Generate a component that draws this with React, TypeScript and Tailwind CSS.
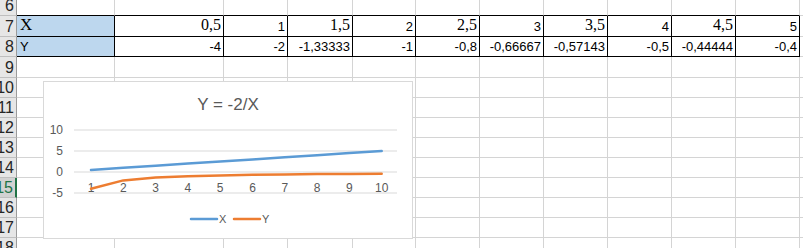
import React from "react";

const COLS = [98, 109, 64, 65, 63, 64, 64, 64, 64, 64, 64];
const ROWS = [
  { n: 6, h: 16 },
  { n: 7, h: 21 },
  { n: 8, h: 20 },
  { n: 9, h: 21 },
  { n: 10, h: 20 },
  { n: 11, h: 20 },
  { n: 12, h: 20 },
  { n: 13, h: 20 },
  { n: 14, h: 20 },
  { n: 15, h: 20 },
  { n: 16, h: 20 },
  { n: 17, h: 20 },
  { n: 18, h: 20 },
];

const xRow = ["0,5", "1", "1,5", "2", "2,5", "3", "3,5", "4", "4,5", "5"];
const yRow = [
  "-4",
  "-2",
  "-1,33333",
  "-1",
  "-0,8",
  "-0,66667",
  "-0,57143",
  "-0,5",
  "-0,44444",
  "-0,4",
];

const xVals = [0.5, 1, 1.5, 2, 2.5, 3, 3.5, 4, 4.5, 5];
const yVals = xVals.map((v) => -2 / v);

function Cell({ row, col }: { row: number; col: number }) {
  const inTable = row === 7 || row === 8;
  const aboveTable = row === 6;
  const isA = col === 0;

  let content: React.ReactNode = null;
  if (row === 7 && isA) {
    content = (
      <span className="pl-[3px] font-['Liberation_Serif',serif] text-[17px] leading-none text-black">
        X
      </span>
    );
  } else if (row === 8 && isA) {
    content = (
      <span className="pl-[3px] text-[13px] leading-none text-black">Y</span>
    );
  } else if (row === 7) {
    const t = xRow[col - 1];
    const half = t.includes(",");
    content = (
      <span
        className={
          half
            ? "ml-auto pr-[2px] font-['Liberation_Serif',serif] text-[16px] leading-none text-black"
            : "ml-auto pr-[2px] text-[13px] leading-none text-black"
        }
      >
        {t}
      </span>
    );
  } else if (row === 8) {
    content = (
      <span className="ml-auto pr-[2px] text-[13px] leading-none text-black">
        {yRow[col - 1]}
      </span>
    );
  }

  return (
    <div
      className={`flex items-end overflow-hidden pb-[3px] ${
        inTable
          ? "border-r border-b border-r-black border-b-black"
          : aboveTable
            ? "border-r border-b border-r-[#d4d4d4] border-b-black"
            : "border-r border-b border-[#d4d4d4]"
      } ${inTable && isA ? "bg-[#bdd7ee]" : "bg-white"}`}
    >
      {content}
    </div>
  );
}

function Chart() {
  const px = (i: number) => 47 + 32.3 * i;
  const py = (v: number) => 90 - 4.2 * v;
  const pts = (vals: number[]) =>
    vals.map((v, i) => `${px(i).toFixed(1)},${py(v).toFixed(1)}`).join(" ");
  const font = "Liberation Sans, sans-serif";

  return (
    <div className="absolute left-[43px] top-[81px] h-[158px] w-[370px] border border-[#d9d9d9] bg-white">
      <svg width="368" height="156" className="block">
        <text
          x="184"
          y="28"
          textAnchor="middle"
          fontSize="17"
          fill="#595959"
          fontFamily={font}
        >
          Y = -2/X
        </text>
        {[10, 5, 0, -5].map((v) => (
          <g key={v}>
            <line
              x1="30"
              x2="353"
              y1={py(v)}
              y2={py(v)}
              stroke="#d9d9d9"
              strokeWidth="1"
            />
            <text
              x="19"
              y={py(v) + 4}
              textAnchor="end"
              fontSize="12"
              fill="#595959"
              fontFamily={font}
            >
              {v}
            </text>
          </g>
        ))}
        {xVals.map((_, i) => (
          <text
            key={i}
            x={px(i)}
            y="110"
            textAnchor="middle"
            fontSize="12"
            fill="#595959"
            fontFamily={font}
          >
            {i + 1}
          </text>
        ))}
        <polyline
          points={pts(xVals)}
          fill="none"
          stroke="#5b9bd5"
          strokeWidth="2.5"
          strokeLinecap="round"
          strokeLinejoin="round"
        />
        <polyline
          points={pts(yVals)}
          fill="none"
          stroke="#ed7d31"
          strokeWidth="2.5"
          strokeLinecap="round"
          strokeLinejoin="round"
        />
        {/* legend */}
        <line
          x1="147"
          x2="173"
          y1="137"
          y2="137"
          stroke="#5b9bd5"
          strokeWidth="2.5"
          strokeLinecap="round"
        />
        <text x="175" y="141" fontSize="11" fill="#595959" fontFamily={font}>
          X
        </text>
        <line
          x1="190"
          x2="216"
          y1="137"
          y2="137"
          stroke="#ed7d31"
          strokeWidth="2.5"
          strokeLinecap="round"
        />
        <text x="218" y="141" fontSize="11" fill="#595959" fontFamily={font}>
          Y
        </text>
      </svg>
    </div>
  );
}

export default function App() {
  return (
    <div className="relative h-[248px] w-[803px] overflow-hidden bg-white font-['Liberation_Sans',sans-serif]">
      <div
        className="grid"
        style={{
          gridTemplateColumns: `17px ${COLS.map((c) => `${c}px`).join(" ")} 1fr`,
          gridTemplateRows: ROWS.map((r) => `${r.h}px`).join(" "),
        }}
      >
        {ROWS.map((r) => (
          <React.Fragment key={r.n}>
            <div
              className={`flex items-end justify-end overflow-hidden border-b border-[#bfbfbf] pr-[2px] pb-[1px] text-[16px] leading-none ${
                r.n === 15
                  ? "border-r-2 border-r-[#217346] bg-[#d2d2d2] text-[#217346]"
                  : "border-r border-r-[#9b9b9b] bg-[#e6e6e6] text-[#262626]"
              }`}
            >
              {r.n}
            </div>
            {COLS.map((_, ci) => (
              <Cell key={ci} row={r.n} col={ci} />
            ))}
            <div className="border-b border-[#d4d4d4] bg-white" />
          </React.Fragment>
        ))}
      </div>
      <Chart />
    </div>
  );
}
